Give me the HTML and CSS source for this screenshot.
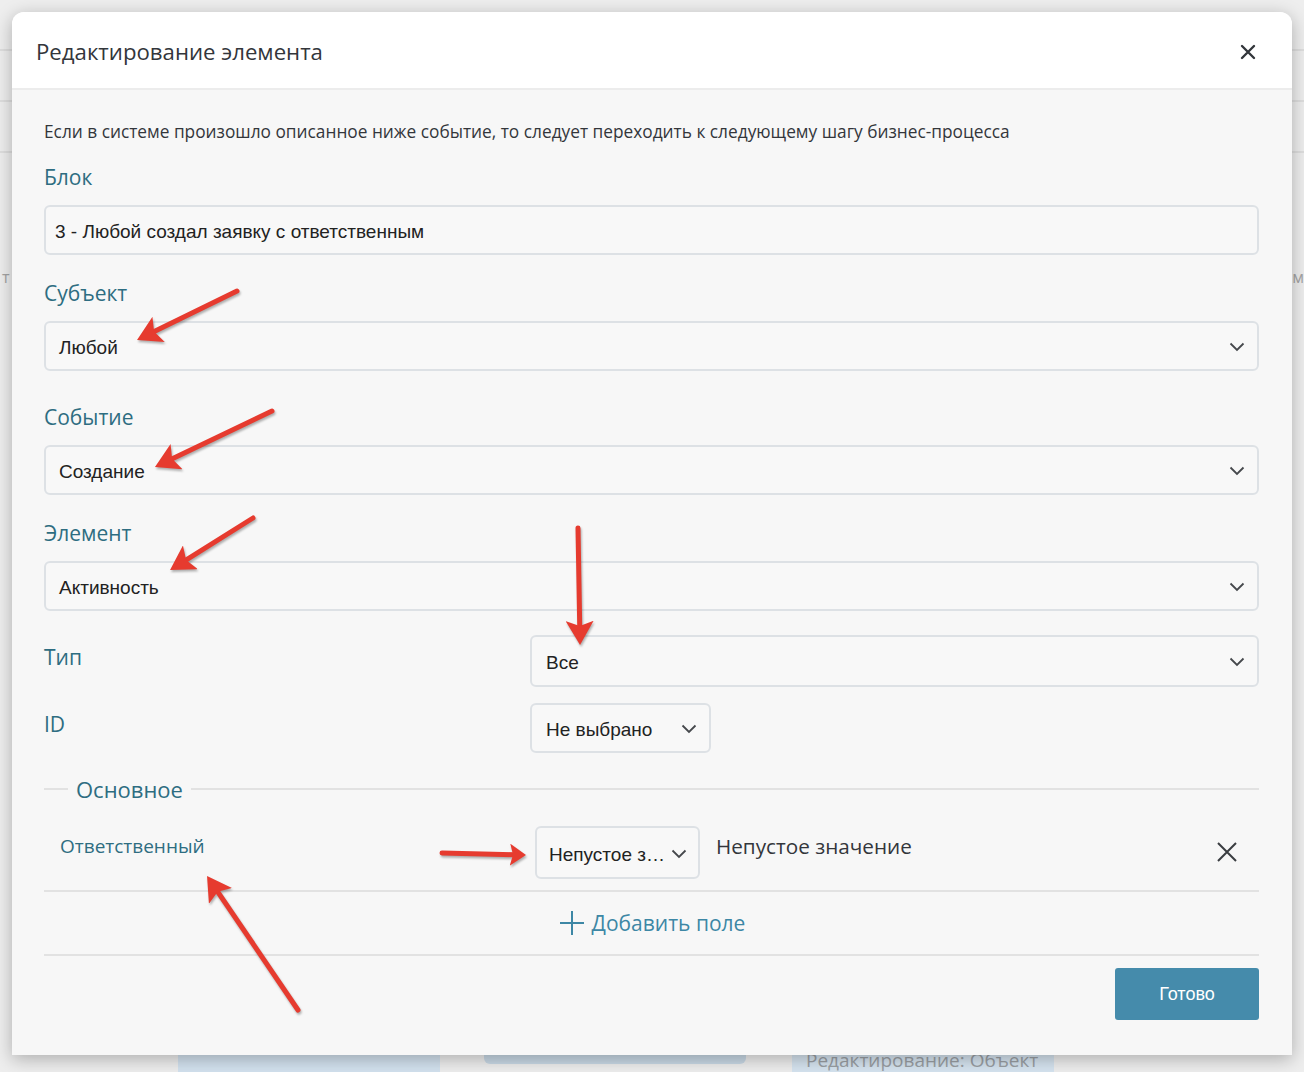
FILE: index.html
```html
<!DOCTYPE html>
<html>
<head>
    <meta charset="utf-8">
    <link rel="stylesheet" href="styles.css">
</head>
<body>
    <div class="backdrop">
        <div class="backdrop-rows">
            <div class="backdrop-row"></div>
            <div class="backdrop-row"></div>
            <div class="backdrop-row"></div>
        </div>
        <div class="backdrop-text"><span>т</span><span>м</span></div>
        <div class="backdrop-spacer"></div>
        <div class="backdrop-bottom">
            <div class="backdrop-card"></div>
            <div class="backdrop-card backdrop-card-round"></div>
            <div class="backdrop-card backdrop-card-text">Редактирование: Объект</div>
        </div>
    </div>

    <div class="modal">
        <div class="modal-header">
            <h2 class="modal-title">Редактирование элемента</h2>
            <button class="modal-close">
                <svg width="16" height="16" viewBox="0 0 16 16"><path d="M2 2 L14 14 M14 2 L2 14" stroke="#33363b" stroke-width="2.4" stroke-linecap="round"/></svg>
            </button>
        </div>

        <div class="modal-body">
            <p class="modal-hint">Если в системе произошло описанное ниже событие, то следует переходить к следующему шагу бизнес-процесса</p>

            <div class="field">
                <label class="field-label">Блок</label>
                <div class="input input-text">3 - Любой создал заявку с ответственным</div>
            </div>

            <div class="field">
                <label class="field-label">Субъект</label>
                <div class="input select">
                    <span>Любой</span>
                    <svg class="chevron" width="16" height="10" viewBox="0 0 16 10"><polyline points="1.5,1.5 8,8 14.5,1.5" fill="none" stroke="#45484c" stroke-width="1.8"/></svg>
                </div>
            </div>

            <div class="field field-spaced">
                <label class="field-label">Событие</label>
                <div class="input select">
                    <span>Создание</span>
                    <svg class="chevron" width="16" height="10" viewBox="0 0 16 10"><polyline points="1.5,1.5 8,8 14.5,1.5" fill="none" stroke="#45484c" stroke-width="1.8"/></svg>
                </div>
            </div>

            <div class="field">
                <label class="field-label">Элемент</label>
                <div class="input select">
                    <span>Активность</span>
                    <svg class="chevron" width="16" height="10" viewBox="0 0 16 10"><polyline points="1.5,1.5 8,8 14.5,1.5" fill="none" stroke="#45484c" stroke-width="1.8"/></svg>
                </div>
            </div>

            <div class="field-row">
                <label class="field-label">Тип</label>
                <div class="input select select-type">
                    <span>Все</span>
                    <svg class="chevron" width="16" height="10" viewBox="0 0 16 10"><polyline points="1.5,1.5 8,8 14.5,1.5" fill="none" stroke="#45484c" stroke-width="1.8"/></svg>
                </div>
            </div>

            <div class="field-row">
                <label class="field-label">ID</label>
                <div class="input select select-id">
                    <span>Не выбрано</span>
                    <svg class="chevron" width="16" height="10" viewBox="0 0 16 10"><polyline points="1.5,1.5 8,8 14.5,1.5" fill="none" stroke="#45484c" stroke-width="1.8"/></svg>
                </div>
            </div>

            <div class="group">
                <div class="group-legend">Основное</div>

                <div class="cond-row">
                    <div class="cond-label">Ответственный</div>
                    <div class="input select select-cond">
                        <span class="select-cut">Непустое з…</span>
                        <svg class="chevron" width="16" height="10" viewBox="0 0 16 10"><polyline points="1.5,1.5 8,8 14.5,1.5" fill="none" stroke="#45484c" stroke-width="1.8"/></svg>
                    </div>
                    <div class="cond-value">Непустое значение</div>
                    <button class="cond-remove">
                        <svg width="20" height="20" viewBox="0 0 20 20"><path d="M1 1 L19 19 M19 1 L1 19" stroke="#3a3d41" stroke-width="2"/></svg>
                    </button>
                </div>

                <div class="add-field">
                    <svg width="24" height="24" viewBox="0 0 24 24"><path d="M12 0 V24 M0 12 H24" stroke="#3d87a5" stroke-width="2"/></svg>
                    <span>Добавить поле</span>
                </div>
            </div>

            <div class="modal-footer">
                <button class="btn-done">Готово</button>
            </div>
        </div>
    </div>

    <svg class="annotations" width="1304" height="1072" viewBox="0 0 1304 1072">
        <defs>
            <marker id="head" viewBox="0 0 24 28" refX="10" refY="14" markerWidth="24" markerHeight="28" markerUnits="userSpaceOnUse" orient="auto">
                <path d="M0 0 L24 14 L0 28 L5 14 Z" fill="#e63b2f"/>
            </marker>
            <marker id="head-small" viewBox="0 0 16 22" refX="6" refY="11" markerWidth="16" markerHeight="22" markerUnits="userSpaceOnUse" orient="auto">
                <path d="M0 0 L16 11 L0 22 L3 11 Z" fill="#e63b2f"/>
            </marker>
        </defs>
        <g class="arrows" stroke="#e63b2f" stroke-width="5" stroke-linecap="round" fill="none">
            <line x1="237" y1="291" x2="149.6" y2="333.8" marker-end="url(#head)"/>
            <line x1="272" y1="411" x2="167.6" y2="461" marker-end="url(#head)"/>
            <line x1="253" y1="518" x2="181.9" y2="562.6" marker-end="url(#head)"/>
            <line x1="578" y1="528" x2="579.8" y2="631" marker-end="url(#head)"/>
            <line x1="442" y1="853" x2="516" y2="854.8" marker-end="url(#head-small)"/>
            <line x1="298" y1="1010" x2="214.9" y2="887.6" marker-end="url(#head)"/>
        </g>
    </svg>
</body>
</html>
```

FILE: styles.css
```css
* {
    margin: 0;
    padding: 0;
    box-sizing: border-box;
}

body {
    font-family: "Open Sans", "Noto Sans", sans-serif;
    background-color: #eeeeee;
    width: 1304px;
    height: 1072px;
    overflow: hidden;
    position: relative;
}

/* page behind the dialog */
.backdrop {
    height: 1072px;
    display: flex;
    flex-direction: column;
}

.backdrop-row {
    height: 51px;
    border-bottom: 2px solid #dedede;
}

.backdrop-text {
    display: flex;
    justify-content: space-between;
    padding: 114px 0 0 2px;
    font-size: 16px;
    line-height: 20px;
    color: #a4a4a4;
}

.backdrop-spacer {
    flex: 1;
}

.backdrop-bottom {
    height: 30px;
    display: flex;
    padding-left: 178px;
    gap: 44px;
}

.backdrop-card {
    width: 262px;
    background-color: #d3e2ef;
}

.backdrop-card-round {
    background-color: #c9d9e6;
    height: 22px;
    border-radius: 0 0 6px 6px;
}

.backdrop-card-text {
    margin-left: 2px;
    padding: 6px 0 0 14px;
    color: #9a9fa4;
    font-size: 19px;
    line-height: 24px;
    white-space: nowrap;
    background-color: #d6e4f0;
}

/* dialog */
.modal {
    position: absolute;
    top: 12px;
    left: 12px;
    width: 1280px;
    background-color: #f7f7f7;
    border-radius: 12px 12px 0 0;
    box-shadow: 0 4px 18px rgba(0, 0, 0, 0.28);
}

.modal-header {
    height: 78px;
    display: flex;
    align-items: center;
    justify-content: space-between;
    padding: 3px 34px 0 24px;
    background-color: #ffffff;
    border-radius: 12px 12px 0 0;
    border-bottom: 2px solid #ececec;
}

.modal-title {
    font-size: 22.2px;
    font-weight: 400;
    color: #33363b;
}

.modal-close {
    background: none;
    border: none;
    width: 20px;
    height: 20px;
    display: flex;
    align-items: center;
    justify-content: center;
}

.modal-body {
    padding: 31px 33px 35px 32px;
}

.modal-hint {
    font-size: 17.3px;
    line-height: 22px;
    color: #33363b;
    margin-bottom: 20px;
}

.field {
    margin-bottom: 24px;
}

.field-spaced {
    padding-top: 8px;
}

.field-label {
    display: block;
    font-size: 21px;
    line-height: 28px;
    color: #2e6d81;
    margin-bottom: 14px;
}

.input {
    height: 50px;
    border: 2px solid #dde1e5;
    border-radius: 6px;
    background-color: #f8f8f8;
    font-family: "Liberation Sans", Arial, sans-serif;
    font-size: 19px;
    color: #222222;
    display: flex;
    align-items: center;
    padding: 3px 12px 0 9px;
}

.select {
    justify-content: space-between;
    padding-left: 13px;
}

.chevron {
    flex-shrink: 0;
    margin-top: -2px;
}

.field-row {
    display: flex;
    align-items: center;
    margin-bottom: 16px;
}

.field-row .field-label {
    width: 486px;
    margin-bottom: 0;
    margin-top: -8px;
}

.select-type {
    flex: 1;
    height: 52px;
    padding-left: 14px;
}

.select-type span {
    margin-top: 1px;
}

.select-id {
    width: 181px;
    padding-left: 14px;
}

/* group of conditions */
.group {
    margin-top: 21px;
}

.group-legend {
    display: flex;
    align-items: center;
    gap: 8px;
    font-size: 22px;
    line-height: 30px;
    color: #2e6d81;
}

.group-legend::before,
.group-legend::after {
    content: '';
    height: 2px;
    background-color: #e2e2e2;
}

.group-legend::before {
    width: 24px;
}

.group-legend::after {
    flex: 1;
}

.cond-row {
    display: flex;
    align-items: flex-start;
    padding: 22px 22px 11px 16px;
    border-bottom: 2px solid #e2e2e2;
}

.cond-label {
    width: 475px;
    padding-top: 7px;
    font-size: 19px;
    line-height: 26px;
    color: #2e6d81;
}

.select-cond {
    width: 165px;
    height: 53px;
    padding: 4px 11px 0 12px;
}

.select-cut {
    white-space: nowrap;
}

.cond-value {
    flex: 1;
    padding: 6px 0 0 16px;
    font-size: 20.7px;
    line-height: 28px;
    color: #33363b;
}

.cond-remove {
    background: none;
    border: none;
    width: 20px;
    height: 20px;
    margin-top: 16px;
}

.add-field {
    height: 64px;
    display: flex;
    align-items: center;
    justify-content: center;
    gap: 8px;
    border-bottom: 2px solid #e2e2e2;
    color: #3d87a5;
    font-size: 21px;
    padding-left: 2px;
}

.add-field span {
    margin-top: -1px;
}

.modal-footer {
    display: flex;
    justify-content: flex-end;
    padding-top: 12px;
}

.btn-done {
    width: 144px;
    height: 52px;
    border: none;
    border-radius: 3px;
    background-color: #458bab;
    color: #ffffff;
    font-family: "Liberation Sans", Arial, sans-serif;
    font-size: 18px;
}

/* red annotation arrows drawn over the screenshot */
.annotations {
    position: absolute;
    top: 0;
    left: 0;
    pointer-events: none;
}

.arrows {
    filter: drop-shadow(1px 2px 1px rgba(0, 0, 0, 0.3));
}
```
